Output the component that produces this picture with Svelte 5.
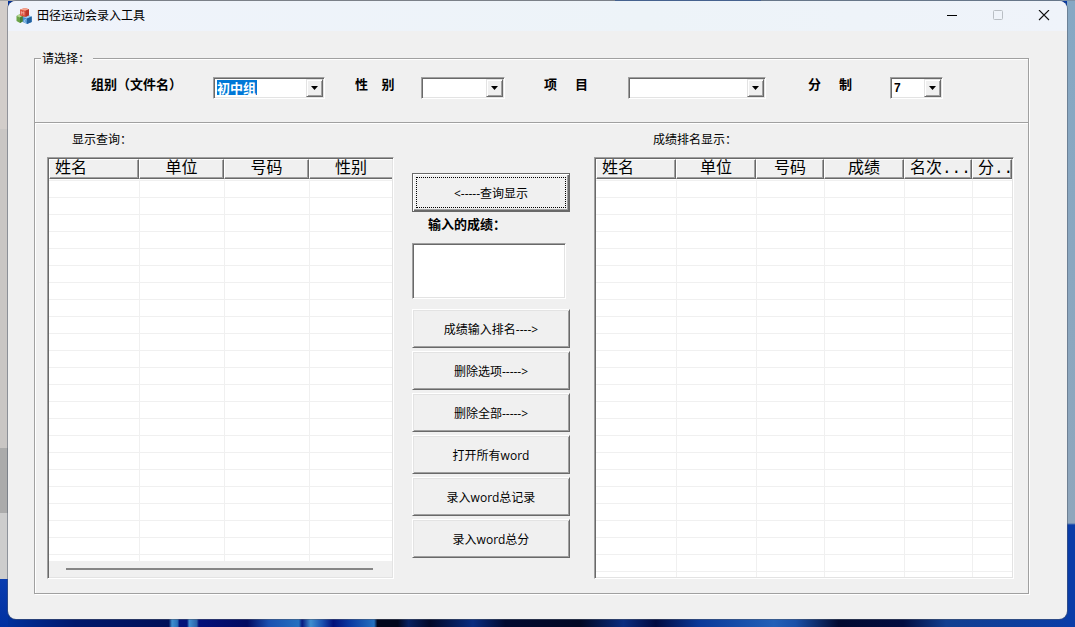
<script>
  const filters = [
    { id: 'group', label: '组别（文件名）', options: ['初中组', '高中组'], active: true },
    { id: 'gender', label: '性\u00a0\u00a0\u00a0别', options: ['', '男', '女'] },
    { id: 'event', label: '项\u00a0\u00a0\u00a0\u00a0目', options: ['', '100米', '200米'] },
    { id: 'points', label: '分\u00a0\u00a0\u00a0\u00a0制', options: ['7', '8', '9'] }
  ];

  const queryColumns = [
    { title: '姓名', width: 90, left: true },
    { title: '单位', width: 85 },
    { title: '号码', width: 85 },
    { title: '性别', width: 83 }
  ];

  const rankColumns = [
    { title: '姓名', width: 80, left: true },
    { title: '单位', width: 80 },
    { title: '号码', width: 68 },
    { title: '成绩', width: 80 },
    { title: '名次...', width: 68, left: true },
    { title: '分..', width: 40, left: true }
  ];

  const actions = ['成绩输入排名---->', '删除选项----->', '删除全部----->', '打开所有word', '录入word总记录', '录入word总分'];

  const share = (columns, column) => (column.width / columns.reduce((sum, c) => sum + c.width, 0)) * 100;
</script>

{#snippet grid(columns, rows, labelId)}
  <table aria-labelledby={labelId}>
    <colgroup>
      {#each columns as column}
        <col style:width="{share(columns, column)}%" />
      {/each}
    </colgroup>
    <thead>
      <tr>
        {#each columns as column}
          <th scope="col" class:left={column.left}>{column.title}</th>
        {/each}
      </tr>
    </thead>
    <tbody>
      {#each Array(rows) as _}
        <tr>
          {#each columns as _c}<td></td>{/each}
        </tr>
      {/each}
    </tbody>
  </table>
{/snippet}

<div class="desktop">
  <main class="window">
    <header class="titlebar">
      <svg class="app-icon" viewBox="0 0 16 16" aria-hidden="true">
        <path d="M0.5 8 4 6 7.5 7.500v5.500L4 15 0.5 13z" fill="#6ba348" />
        <path d="M0.5 8 4 6 7.5 7.500 4 9.500z" fill="#b5d596" />
        <path d="M4 9.500 7.5 7.500v5.500L4 15z" fill="#4a7f33" />
        <path d="M6.800 9 11.500 7 15.700 8.500v5.500L11 16 6.800 14z" fill="#4c92cf" />
        <path d="M6.800 9 11.500 7 15.700 8.500 11 10.500z" fill="#9bcaee" />
        <path d="M11 10.500 15.700 8.500v5.500L11 16z" fill="#22609f" />
        <path d="M4 1.500 9 0 13 1.200V7.200L9 9 4 7.500z" fill="#dd5540" />
        <path d="M4 1.500 9 0 13 1.200 9.500 2.800z" fill="#f3a590" />
        <path d="M9.500 2.800 13 1.200V7.200L9.500 9z" fill="#b93529" />
        <path d="M5.300 6.500v-3l1.200 1.500 1.300-1.200v3" fill="none" stroke="#f8c9bd" stroke-width=".7" />
        <path d="M10.300 12c-1.200-.5-2.300 0-2.200 1.200.1.900 1.200 1.200 2 .9" fill="none" stroke="#d4ebfb" stroke-width=".8" />
      </svg>
      <h1>田径运动会录入工具</h1>
      <div class="caption">
        <button type="button" aria-label="最小化">
          <svg viewBox="0 0 12 12"><path d="M1 5.500h10" stroke="#000" /></svg>
        </button>
        <button type="button" aria-label="最大化" disabled>
          <svg viewBox="0 0 12 12"><rect x="1.500" y="0.500" width="9" height="9" rx="1" fill="none" stroke="#b9bec4" /></svg>
        </button>
        <button type="button" aria-label="关闭">
          <svg viewBox="0 0 12 12"><path d="M1 0l10 10M11 0L1 10" stroke="#111" stroke-width="1.100" /></svg>
        </button>
      </div>
    </header>

    <fieldset>
      <legend>请选择：</legend>
      <div class="filters">
        {#each filters as filter}
          <div class="field {filter.id}">
            <label for={filter.id}>{filter.label}</label>
            <div class="combo" class:active={filter.active}>
              <select id={filter.id}>
                {#each filter.options as option}<option>{option}</option>{/each}
              </select>
              <span class="drop" aria-hidden="true">
                <svg viewBox="0 0 7 4"><path d="M0 0h7L3.500 4z" fill="#000" /></svg>
              </span>
            </div>
          </div>
        {/each}
      </div>

      <div class="workspace">
        <section class="query">
          <h2 id="query-title">显示查询：</h2>
          <div class="list">
            {@render grid(queryColumns, 24, 'query-title')}
            <div class="scroll"><span></span></div>
          </div>
        </section>

        <section class="actions">
          <button type="button" class="push default">&lt;-----查询显示</button>
          <label for="score">输入的成绩：</label>
          <input id="score" type="text" />
          <div class="stack">
            {#each actions as action}
              <button type="button" class="push">{action}</button>
            {/each}
          </div>
        </section>

        <section class="rank">
          <h2 id="rank-title">成绩排名显示：</h2>
          <div class="list">
            {@render grid(rankColumns, 25, 'rank-title')}
          </div>
        </section>
      </div>
    </fieldset>
  </main>
</div>

<style>
  :global(body) {
    margin: 0;
  }

  .desktop,
  .desktop * {
    box-sizing: border-box;
  }

  .desktop {
    min-height: 100vh;
    padding: 1px 8px 8px;
    display: flex;
    font: 12px/18px 'Open Sans', 'Noto Sans CJK SC', sans-serif;
    color: #000;
    background:
      linear-gradient(90deg, #a6a6a6 0 57.2%, #3b69b2 57.2% 70.8%, #7e93a8 70.8%) top / 100% 1px no-repeat,
      linear-gradient(#d2cdca 0 129px, #c9c6c4 129px 448px, #ababab 448px 513px, #cdcdcd 513px 579px, #0a3db0 579px, #0030a0) left / 8px 100% no-repeat,
      linear-gradient(#86a8c4 0, #8fa6bc 523px, #0a3da8 525px) right / 8px 100% no-repeat,
      linear-gradient(
        90deg,
        #0033a0 0, #00186c 7%, #001058 15.700%, #3f8fd0 16%, #2a70b8 16.500%, #02147a 16.700%, #02147a 17.400%,
        #3f8fd0 17.600%, #2a62a8 18.300%, #03107a 18.500%, #020a60 23%, #1a50b0 25%, #2470c0 27.800%,
        #061a80 28.100%, #3f8fd0 28.900%, #1a50b0 30%, #03107a 31%, #0a38a0 32.500%, #2470c0 34.800%,
        #02061c 35.100%, #02061c 37%, #082060 38%, #010828 40%, #082c80 44%, #010a30 47%, #010824 54%,
        #0a2c80 58%, #010a40 61%, #0a3898 65%, #2260b8 72%, #1a50a8 74%, #010a30 78%, #020c40 84%, #123f90 88%, #0a3da8 100%
      );
  }

  .window {
    flex: 1;
    min-width: 0;
    overflow: hidden;
    border-radius: 8px;
    background: #f0f0f0;
    box-shadow: 0 0 0 1px rgba(80, 90, 105, 0.5);
  }

  .titlebar {
    display: flex;
    align-items: center;
    height: 30px;
    padding-left: 8px;
    background: linear-gradient(90deg, #eff3fb, #edf3f8 60%, #eff3fa);
  }

  .app-icon {
    width: 16px;
    height: 16px;
    margin-right: 5px;
  }

  h1,
  h2 {
    margin: 0;
    font: inherit;
  }

  .caption {
    display: flex;
    height: 100%;
    margin-left: auto;
  }

  .caption button {
    display: grid;
    place-items: center;
    width: 46px;
    padding: 0;
    border: 0;
    background: none;
  }

  .caption svg {
    width: 12px;
    height: 12px;
  }

  fieldset {
    min-width: 0;
    margin: 18px 38px 25px 26px;
    padding: 0;
    border: 1px solid #a0a0a0;
    box-shadow: 1px 1px #fff, inset 1px 1px #fff;
  }

  legend {
    margin-left: 6px;
    padding: 1px 3px 0 1px;
    line-height: 17px;
    background: #f0f0f0;
  }

  .filters {
    display: grid;
    grid-template-columns: 264fr 189fr 264fr 220fr;
    padding: 10px 0 23px 56px;
    border-bottom: 1px solid #a0a0a0;
    box-shadow: 0 1px #fff;
  }

  .field {
    display: flex;
    align-items: flex-start;
  }

  .field label,
  .actions label {
    font: bold 13px/16px 'DejaVu Sans', 'Noto Sans CJK SC', sans-serif;
    white-space: nowrap;
  }

  .group label { width: 122px; }
  .gender label { width: 66px; }
  .event label { width: 84px; }
  .points label { width: 82px; }
  .group .combo { width: 112px; }
  .gender .combo { width: 84px; }
  .event .combo { width: 138px; }
  .points .combo { width: 53px; }

  .combo,
  .list,
  input {
    border: 1px solid;
    border-color: #a0a0a0 #fff #fff #a0a0a0;
    box-shadow: inset 1px 1px #696969, inset -1px -1px #e3e3e3;
    background: #fff;
  }

  .combo {
    display: grid;
    grid-template-columns: 1fr 17px;
    height: 22px;
    padding: 1px;
  }

  select {
    grid-area: 1 / 1 / 2 / 3;
    width: 100%;
    min-width: 0;
    padding: 0 17px 1px 2px;
    border: 0;
    border-radius: 0;
    outline: 0;
    appearance: none;
    background: none;
    color: #000;
    font: bold 13px/16px 'Noto Sans CJK SC', sans-serif;
  }

  .active select {
    color: #fff;
    background: linear-gradient(#0078d7, #0078d7) 2px 1px / 40px 15px no-repeat;
  }

  .points select {
    font: bold 12px/16px 'Liberation Sans', sans-serif;
  }

  select option {
    color: #000;
  }

  .drop {
    grid-area: 1 / 2;
    display: grid;
    place-items: center;
    pointer-events: none;
    background: #f0f0f0;
    border: 1px solid;
    border-color: #e3e3e3 #696969 #696969 #e3e3e3;
    box-shadow: inset 1px 1px #fff, inset -1px -1px #a0a0a0;
  }

  .drop svg {
    width: 7px;
    height: 4px;
  }

  .workspace {
    display: grid;
    grid-template-columns: 347fr 158px 426fr;
    column-gap: 18px;
    padding: 7px 14px 14px 12px;
  }

  section {
    min-width: 0;
  }

  h2 {
    padding: 1px 0 8px 25px;
  }

  .rank {
    padding-left: 6px;
  }

  .rank h2 {
    padding-left: 59px;
  }

  .list {
    padding: 1px;
    overflow: hidden;
  }

  table {
    width: 100%;
    table-layout: fixed;
    border-collapse: separate;
    border-spacing: 0;
  }

  th {
    height: 20px;
    padding: 0 6px;
    border: 1px solid;
    border-color: #fff #696969 #696969 #fff;
    box-shadow: inset -1px -1px #a0a0a0;
    background: #f0f0f0;
    font: 16px/18px 'Liberation Mono', 'Noto Sans CJK SC', monospace;
    text-align: center;
    white-space: nowrap;
  }

  th.left {
    padding: 0 0 0 5px;
    text-align: left;
  }

  .query th:last-child {
    border-right: 0;
    box-shadow: inset 0 -1px #a0a0a0;
  }

  td {
    height: 17px;
    padding: 0;
    border-bottom: 1px solid #f0f0f0;
  }

  td + td {
    border-left: 1px solid #f0f0f0;
  }

  tbody tr:first-child td {
    height: 2px;
  }

  tbody tr:last-child td {
    height: 6px;
    border-bottom: 0;
  }

  .rank tbody tr:last-child td {
    height: 5px;
  }

  .scroll {
    display: flex;
    align-items: center;
    height: 16px;
    padding: 0 19px 0 17px;
    background: #f0f0f0;
  }

  .scroll span {
    flex: 1;
    height: 2px;
    background: #868686;
  }

  .actions {
    display: flex;
    flex-direction: column;
    padding-top: 43px;
  }

  .push {
    height: 39px;
    padding: 2px 0 0;
    border: 1px solid;
    border-color: #fff #696969 #696969 #fff;
    border-radius: 0;
    box-shadow: inset 1px 1px #e3e3e3, inset -1px -1px #a0a0a0;
    background: #f0f0f0;
    color: #000;
    font: inherit;
  }

  .push.default {
    border-color: #696969;
    box-shadow: inset 1px 1px #fff, inset -1px -1px #696969, inset -2px -2px #a0a0a0;
    outline: 1px dotted #000;
    outline-offset: -5px;
  }

  .actions label {
    margin: 5px 0 10px 16px;
  }

  input {
    width: 154px;
    height: 56px;
    margin-bottom: 10px;
    padding: 4px;
    border-radius: 0;
    outline: 0;
    font: inherit;
  }

  .stack {
    display: grid;
    gap: 3px;
  }
</style>
